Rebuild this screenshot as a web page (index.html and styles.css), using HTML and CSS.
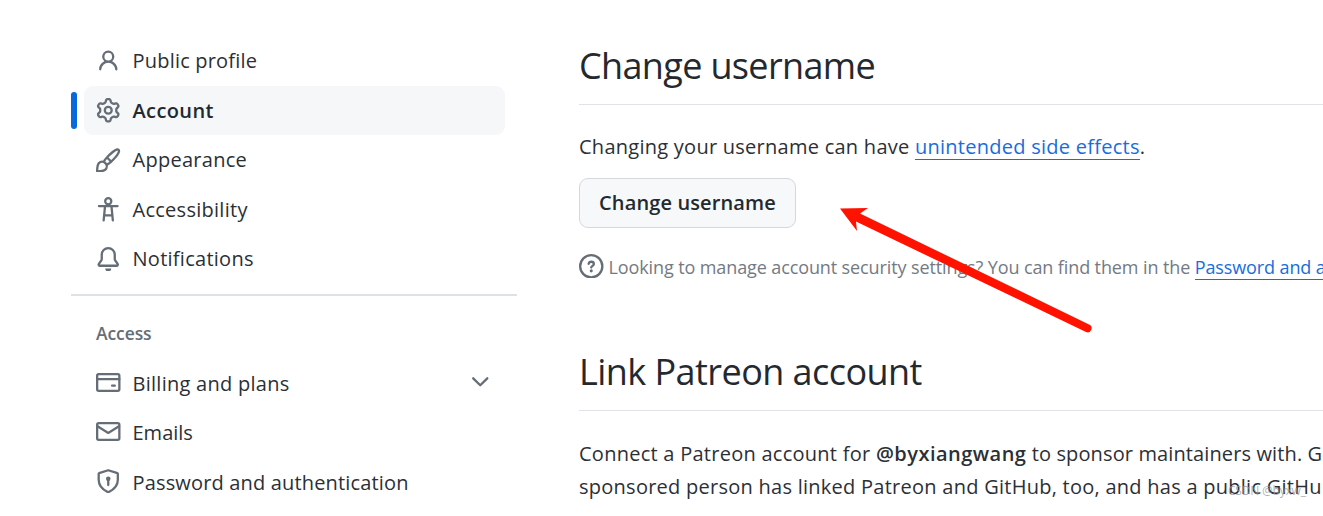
FILE: index.html
```html
<!DOCTYPE html>
<html lang="en">
<head>
<meta charset="utf-8">
<title>Account settings</title>
<link rel="stylesheet" href="styles.css">
</head>
<body>
<div class="page">
  <nav class="sidebar">
    <ul class="nav-list">
      <li class="nav-item">
        <svg class="icon" viewBox="0 0 16 16"><path d="M10.561 8.073a6.005 6.005 0 0 1 3.432 5.142.75.75 0 1 1-1.498.07 4.5 4.5 0 0 0-8.99 0 .75.75 0 0 1-1.498-.07 6.004 6.004 0 0 1 3.431-5.142 3.999 3.999 0 1 1 5.123 0ZM10.5 5a2.5 2.5 0 1 0-5 0 2.5 2.5 0 0 0 5 0Z"/></svg>
        <span class="t-profile">Public profile</span>
      </li>
      <li class="nav-item active">
        <svg class="icon" viewBox="0 0 16 16"><path d="M8 0a8.2 8.2 0 0 1 .701.031C9.444.095 9.99.645 10.16 1.29l.288 1.107c.018.066.079.158.212.224.231.114.454.243.668.386.123.082.233.09.299.071l1.103-.303c.644-.176 1.392.021 1.82.63.27.385.506.792.704 1.218.315.675.111 1.422-.364 1.891l-.814.806c-.049.048-.098.147-.088.294.016.257.016.515 0 .772-.01.147.038.246.088.294l.814.806c.475.469.679 1.216.364 1.891a7.977 7.977 0 0 1-.704 1.217c-.428.61-1.176.807-1.82.63l-1.102-.302c-.067-.019-.177-.011-.3.071a5.909 5.909 0 0 1-.668.386c-.133.066-.194.158-.211.224l-.29 1.106c-.168.646-.715 1.196-1.458 1.26a8.006 8.006 0 0 1-1.402 0c-.743-.064-1.289-.614-1.458-1.26l-.289-1.106c-.018-.066-.079-.158-.212-.224a5.738 5.738 0 0 1-.668-.386c-.123-.082-.233-.09-.299-.071l-1.103.303c-.644.176-1.392-.021-1.82-.63a8.12 8.12 0 0 1-.704-1.218c-.315-.675-.111-1.422.363-1.891l.815-.806c.05-.048.098-.147.088-.294a6.214 6.214 0 0 1 0-.772c.01-.147-.038-.246-.088-.294l-.815-.806C.635 6.045.431 5.298.746 4.623a7.92 7.92 0 0 1 .704-1.217c.428-.61 1.176-.807 1.82-.63l1.102.302c.067.019.177.011.3-.071.214-.143.437-.272.668-.386.133-.066.194-.158.211-.224l.29-1.106C6.009.645 6.556.095 7.299.03 7.53.01 7.764 0 8 0Zm-.571 1.525c-.036.003-.108.036-.137.146l-.289 1.105c-.147.561-.549.967-.998 1.189-.173.086-.34.183-.5.29-.417.278-.97.423-1.529.27l-1.103-.303c-.109-.03-.175.016-.195.045-.22.312-.412.644-.573.99-.014.031-.021.11.059.19l.815.806c.411.406.562.957.53 1.456a4.709 4.709 0 0 0 0 .582c.032.499-.119 1.05-.53 1.456l-.815.806c-.081.08-.073.159-.059.19.162.346.353.677.573.989.02.03.085.076.195.046l1.102-.303c.56-.153 1.113-.008 1.53.27.161.107.328.204.501.29.447.222.85.629.997 1.189l.289 1.105c.029.109.101.143.137.146a6.6 6.6 0 0 0 1.142 0c.036-.003.108-.036.137-.146l.289-1.105c.147-.561.549-.967.998-1.189.173-.086.34-.183.5-.29.417-.278.97-.423 1.529-.27l1.103.303c.109.029.175-.016.195-.045.22-.313.411-.644.573-.99.014-.031.021-.11-.059-.19l-.815-.806c-.411-.406-.562-.957-.53-1.456a4.709 4.709 0 0 0 0-.582c-.032-.499.119-1.05.53-1.456l.815-.806c.081-.08.073-.159.059-.19a6.464 6.464 0 0 0-.573-.989c-.02-.03-.085-.076-.195-.046l-1.102.303c-.56.153-1.113.008-1.53-.27a4.44 4.44 0 0 0-.501-.29c-.447-.222-.85-.629-.997-1.189l-.289-1.105c-.029-.11-.101-.143-.137-.146a6.6 6.6 0 0 0-1.142 0ZM11 8a3 3 0 1 1-6 0 3 3 0 0 1 6 0ZM9.5 8a1.5 1.5 0 1 0-3.001.001A1.5 1.5 0 0 0 9.5 8Z"/></svg>
        <span class="t-account">Account</span>
      </li>
      <li class="nav-item">
        <svg class="icon" viewBox="0 0 16 16"><path d="M11.134 1.535c.7-.509 1.416-.942 2.076-1.155.649-.21 1.463-.267 2.069.34.603.601.568 1.411.368 2.07-.202.668-.624 1.39-1.125 2.096-1.011 1.424-2.496 2.987-3.775 4.249-1.098 1.084-2.132 1.839-3.04 2.3a3.744 3.744 0 0 1-1.055 3.217c-.431.431-1.065.691-1.657.861-.614.177-1.294.287-1.914.357A21.151 21.151 0 0 1 .797 16H.743a.75.75 0 0 1-.743-.742v-.054a21.25 21.25 0 0 1 .13-2.284c.067-.647.187-1.287.358-1.914.17-.591.43-1.226.86-1.657a3.746 3.746 0 0 1 3.227-1.054c.466-.893 1.225-1.907 2.314-2.982 1.271-1.255 2.833-2.75 4.245-3.777ZM1.62 13.089c-.051.464-.086.929-.104 1.395.466-.018.932-.053 1.396-.104a10.511 10.511 0 0 0 1.668-.309c.526-.151.856-.325 1.011-.48a2.25 2.25 0 1 0-3.182-3.182c-.155.155-.329.485-.48 1.01a10.515 10.515 0 0 0-.309 1.67Zm10.396-10.34c-1.224.89-2.605 2.189-3.822 3.384l1.718 1.718c1.21-1.205 2.51-2.597 3.387-3.833.47-.662.78-1.227.912-1.662.134-.444.032-.551.009-.575h-.001V1.78c-.014-.014-.113-.113-.548.027-.432.14-.995.462-1.655.942Zm-4.832 7.266-.001.001a9.859 9.859 0 0 0 1.63-1.142L7.155 7.216a9.7 9.7 0 0 0-1.161 1.607c.482.302.889.71 1.19 1.192Z"/></svg>
        <span class="t-appearance">Appearance</span>
      </li>
      <li class="nav-item">
        <svg class="icon line" viewBox="0 0 16 16"><circle cx="8" cy="2.75" r="2"/><path d="M1.9 5.9h12.2M5.9 6l-.9 9.300M10.100 6l.9 9.300M5.500 12h5"/></svg>
        <span class="t-accessibility">Accessibility</span>
      </li>
      <li class="nav-item">
        <svg class="icon" viewBox="0 0 16 16"><path d="M8 16a2 2 0 0 0 1.985-1.75c.017-.137-.097-.25-.235-.25h-3.5c-.138 0-.252.113-.235.25A2 2 0 0 0 8 16ZM3 5a5 5 0 0 1 10 0v2.947c0 .05.015.098.042.139l1.703 2.555A1.519 1.519 0 0 1 13.482 13H2.518a1.516 1.516 0 0 1-1.263-2.36l1.703-2.554A.255.255 0 0 0 3 7.947Zm5-3.5A3.5 3.5 0 0 0 4.5 5v2.947c0 .346-.102.683-.294.97l-1.703 2.556a.017.017 0 0 0-.003.01l.001.006c0 .002.002.004.004.006l.006.004.007.001h10.964l.007-.001.006-.004.004-.006.001-.007a.017.017 0 0 0-.003-.01l-1.703-2.554a1.745 1.745 0 0 1-.294-.97V5A3.5 3.5 0 0 0 8 1.5Z"/></svg>
        <span class="t-notifications">Notifications</span>
      </li>
    </ul>
    <h3 class="group-title">Access</h3>
    <ul class="nav-list access-list">
      <li class="nav-item">
        <svg class="icon line" viewBox="0 0 16 16"><rect x=".75" y="2.75" width="14.5" height="10.9" rx="1"/><path d="M.75 6h14.5M10.5 10.25h1.8"/></svg>
        <span class="t-billing">Billing and plans</span>
        <svg class="icon line chevron" viewBox="0 0 16 16"><path d="M3.4 6.100 8 10.600l4.600-4.500"/></svg>
      </li>
      <li class="nav-item">
        <svg class="icon line" viewBox="0 0 16 16"><rect x=".75" y="2.75" width="14.5" height="10.9" rx="1"/><path d="M1 4.8l7 4.3 7-4.3"/></svg>
        <span class="t-emails">Emails</span>
      </li>
      <li class="nav-item">
        <svg class="icon line" viewBox="0 0 16 16"><path d="M8 .8l6 1.95q.25.1.25.35V7c0 4-2.5 6.5-6.25 8.2C4.25 13.5 1.75 11 1.75 7V3.1q0-.25.25-.35zM8 6.5v4"/><circle class="dot" cx="8" cy="6.4" r="1.5"/></svg>
        <span class="t-password">Password and authentication</span>
      </li>
    </ul>
  </nav>
  <main class="content">
    <h2 class="title">Change username</h2>
    <p class="text first">Changing your username can have <a class="link" href="#">unintended side effects</a>.</p>
    <button class="button">Change username</button>
    <p class="hint">
      <svg class="icon line hint-icon" viewBox="0 0 16 16"><circle cx="8" cy="8" r="7.25"/><path d="M6.3 6.4c.2-1 .8-1.35 1.7-1.35 1 0 1.7.6 1.7 1.45 0 1.2-1.6 1.2-1.7 2.3"/><circle class="dot" cx="8" cy="11" r="1"/></svg>
      <span>Looking to manage account security settings? You can find them in the <a class="link" href="#">Password and au</a></span>
    </p>
    <h2 class="title second">Link Patreon account</h2>
    <p class="text">Connect a Patreon account for <b class="handle">@byxiangwang</b><span class="tail"> to sponsor maintainers with. G</span><br>sponsored person has linked Patreon and GitHub, too, and has a public GitHub</p>
  </main>
  <svg class="arrow" viewBox="0 0 252 126"><path d="M0 .5 28 0 20 5.5 249 116.500A4 4 0 0 1 246 124L16 13.500 17 23z"/></svg>
  <div class="watermark">CSDN @byxw_</div>
</div>
</body>
</html>
```
FILE: styles.css
```css
* { box-sizing: border-box; }
body { margin: 0; background: #fff; color: #2b3036; font-family: "Open Sans", "Noto Sans", sans-serif; font-size: 20px; overflow: hidden; }
.page { position: relative; display: flex; gap: 62px; width: 1323px; height: 516px; padding: 36px 0 0 71px; overflow: hidden; }
.sidebar { flex: 0 0 446px; }
.nav-list { list-style: none; margin: 0; padding: 0 12px 0 13px; }
.nav-item { position: relative; display: flex; align-items: center; gap: 12px; height: 49.5px; padding: 0 12px; border-radius: 9px; white-space: nowrap; letter-spacing: .27px; }
.nav-item.active { background: #f6f7f9; color: #24292f; font-weight: 600; }
.nav-item.active::before { content: ""; position: absolute; left: -13px; top: 6px; width: 6px; height: 37px; border-radius: 5px; background: #0969da; }
.t-profile { letter-spacing: .2px; }
.t-account { letter-spacing: .38px; }
.t-emails { letter-spacing: 0; }
.t-password { letter-spacing: .16px; }
.icon { flex: none; width: 24.5px; height: 24.5px; fill: #656d76; }
.line { fill: none; stroke: #656d76; stroke-width: 1.5; stroke-linecap: round; stroke-linejoin: round; }
.dot { fill: #656d76; stroke: none; }
.access-list .icon { margin-bottom: 3px; }
.access-list .chevron { margin: 0 1px 4px auto; }
.group-title { display: flex; align-items: center; margin: 10px 0 0; padding: 11px 25px 0; height: 65px; border-top: 2px solid #dde2e7; color: #656d76; font-size: 17.5px; font-weight: 600; letter-spacing: -.1px; }
.content { flex: none; width: 744px; white-space: nowrap; }
.title { margin: 0; height: 69px; border-bottom: 1px solid #dfe3e8; color: #24292f; font-size: 36px; line-height: 60px; font-weight: 400; letter-spacing: -.65px; }
.text { margin: 0; line-height: 33px; letter-spacing: .26px; }
.first { margin-top: 25px; }
.link { display: inline-block; line-height: 24px; color: #186ddd; text-decoration: none; border-bottom: 1px solid #186ddd; }
.button { display: flex; align-items: center; justify-content: center; width: 217px; height: 50px; margin: 15px 0 0; padding: 0 0 2px; border: 1px solid #d4d8dd; border-radius: 9px; background: #f6f8fa; color: #24292f; font: 600 20px "Open Sans", sans-serif; letter-spacing: .13px; }
.hint { display: flex; align-items: center; gap: 5px; height: 28px; margin: 25px 0 0; color: #737a83; font-size: 18px; letter-spacing: -.11px; }
.hint-icon { margin-bottom: 2px; }
.second { margin: 61px 0 26px; letter-spacing: -.55px; }
.handle { font-weight: 600; letter-spacing: .48px; }
.tail { letter-spacing: .12px; }
.arrow { position: absolute; left: 840px; top: 208px; width: 252px; height: 126px; fill: #ff1200; }
.watermark { position: absolute; left: 1228px; top: 483px; color: rgba(150, 150, 155, .75); font-size: 12px; line-height: 16px; letter-spacing: -.2px; }
```
